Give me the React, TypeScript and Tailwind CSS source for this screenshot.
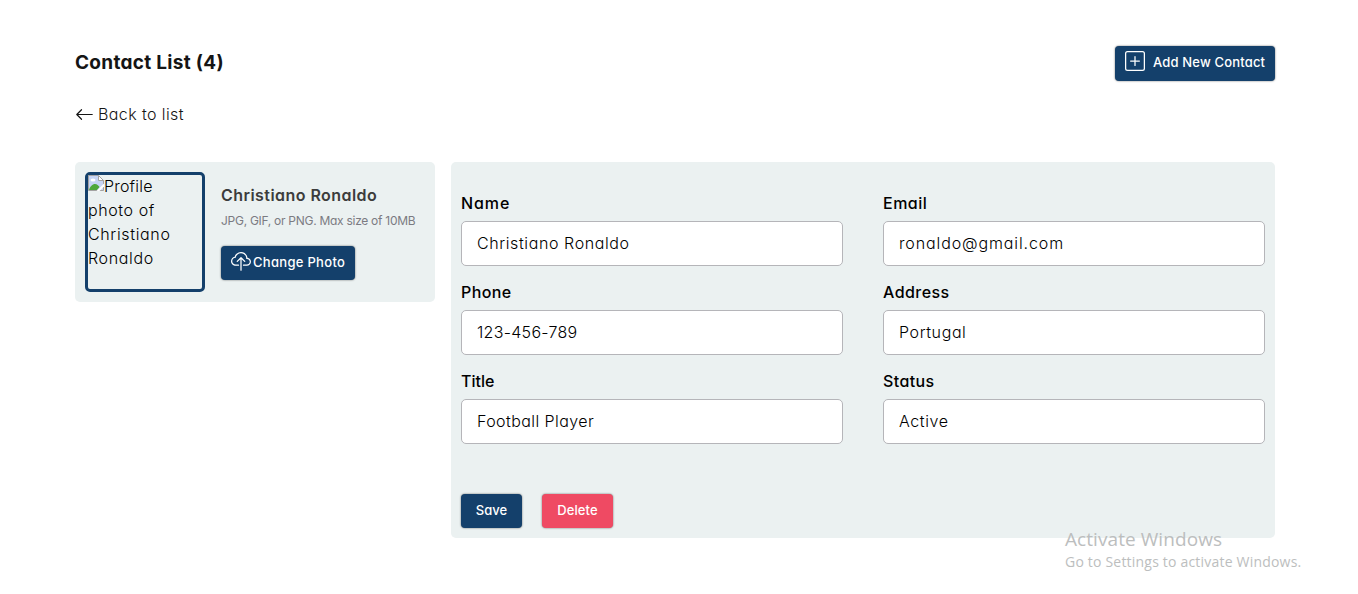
import { useState } from "react";
import { BsArrowLeft, BsCloudUpload, BsPlusSquare } from "react-icons/bs";

const buttonBase =
  "flex items-center rounded text-[13px] font-medium text-white shadow-[0_0_2px_rgba(0,0,0,0.6)]";

interface FieldProps {
  label: string;
  value: string;
  labelSpacing: string;
  spacing: string;
}

function Field({ label, value, labelSpacing, spacing }: FieldProps) {
  const [text, setText] = useState(value);
  return (
    <label className="flex flex-col gap-1.5">
      <span className={`self-start text-base/6 font-medium ${labelSpacing}`}>{label}</span>
      <input
        className={`h-[45px] w-full rounded-[5px] border border-[#b5b5b9] bg-white px-[15px] pb-0.5 text-base font-[350] outline-none ${spacing}`}
        value={text}
        onChange={(e) => setText(e.target.value)}
      />
    </label>
  );
}

function BrokenImage() {
  return (
    <svg width="16" height="16" viewBox="0 0 16 16" className="-mt-1 inline-block align-[1px]">
      <path d="M.5.5h10l5 5v10H.5z" fill="#c6d4f4" stroke="#a3a3a3" />
      <path d="M10.500.500v5h5z" fill="#fff" stroke="#a3a3a3" />
      <ellipse cx="5" cy="5" rx="2.500" ry="1.500" fill="#fff" />
      <path d="M1 15c1-3.500 3.500-6 6-6 2 0 3.500 1.500 4.500 3L9 15z" fill="#4ea83c" />
      <path d="M8.500 16 16 8.500v3L11.500 16z" fill="#fff" />
    </svg>
  );
}

export default function App() {
  return (
    <div className="relative h-[594px] overflow-hidden bg-white pt-[46px] pl-[75px] font-['Inter',sans-serif] text-black [font-feature-settings:'cv11']">
      <div className="w-[1200px]">
        <header className="flex h-[35px] items-start justify-between">
          <h1 className="pt-[3px] text-[19px]/7 font-[650] tracking-[0.3px] text-[#151515]">Contact List (4)</h1>
          <button className={`${buttonBase} h-[35px] w-40 bg-[#14406b] pl-2.5`}>
            <BsPlusSquare className="mr-2 mb-[5px] size-5" />
            <span className="pb-px tracking-[0.17px] whitespace-nowrap">Add New Contact</span>
          </button>
        </header>
        <a className="mt-[21px] flex h-6 items-center text-base font-[350] text-[#151515]">
          <BsArrowLeft className="mr-1 size-[19px]" />
          <span className="tracking-[0.4px]">Back to list</span>
        </a>
        <main className="mt-9 flex items-start gap-4">
          <section className="flex h-[140px] w-[360px] rounded-[5px] bg-[#ebf1f1] p-2.5">
            <div className="size-[120px] shrink-0 rounded-[5px] border-3 border-[#14406b] text-base/6 font-[350]">
              <div className="-mt-px tracking-[0.65px]">
                <BrokenImage />
                <span><span className="tracking-[0.2px]">Profile</span><br /><span className="tracking-[0.6px]">photo of</span><br />Christiano<br />Ronaldo</span>
              </div>
            </div>
            <div className="ml-4 flex flex-col items-start pt-[11px]">
              <h2 className="text-base/6 font-semibold tracking-[0.45px] whitespace-nowrap text-[#3c3c3c]">Christiano Ronaldo</h2>
              <p className="mt-[5px] text-xs/[18px] font-normal tracking-[-0.28px] whitespace-nowrap text-[#7b7b82]">JPG, GIF, or PNG. Max size of 10MB</p>
              <button className={`${buttonBase} mt-4 h-[34px] w-[134px] bg-[#14406b] pl-2.5`}>
                <BsCloudUpload className="mr-[2px] mb-[3px] size-5" />
                <span className="tracking-[0.3px] whitespace-nowrap">Change Photo</span>
              </button>
            </div>
          </section>
          <section className="h-[376px] w-[824px] rounded-[5px] bg-[#ebf1f1] px-2.5 pt-[29px]">
            <div className="grid grid-cols-2 gap-x-10 gap-y-3.5">
              <Field label="Name" value="Christiano Ronaldo" labelSpacing="tracking-[0.9px]" spacing="tracking-[0.6px]" />
              <Field label="Email" value="ronaldo@gmail.com" labelSpacing="tracking-[0.5px]" spacing="tracking-[0.88px]" />
              <Field label="Phone" value="123-456-789" labelSpacing="tracking-[0.4px]" spacing="tracking-[0.3px]" />
              <Field label="Address" value="Portugal" labelSpacing="tracking-[0.45px]" spacing="tracking-[0.6px]" />
              <Field label="Title" value="Football Player" labelSpacing="tracking-[0px]" spacing="tracking-[0.42px]" />
              <Field label="Status" value="Active" labelSpacing="tracking-[0.4px]" spacing="tracking-[0.6px]" />
            </div>
            <div className="mt-[50px] flex gap-5">
              <button className={`${buttonBase} h-[34px] w-[61px] justify-center bg-[#14406b]`}>Save</button>
              <button className={`${buttonBase} h-[34px] w-[71px] justify-center bg-[#ef4a63] tracking-[0.1px]`}>Delete</button>
            </div>
          </section>
        </main>
      </div>
      <div className="pointer-events-none absolute top-[526px] left-[1065px] font-['Open_Sans',sans-serif] whitespace-nowrap text-[#bcbebe]">
        <p className="text-[19px]/[26px] font-normal tracking-[0.07px]">Activate Windows</p>
        <p className="text-[14px]/5 font-normal tracking-[0.2px]">Go to Settings to activate Windows.</p>
      </div>
    </div>
  );
}
